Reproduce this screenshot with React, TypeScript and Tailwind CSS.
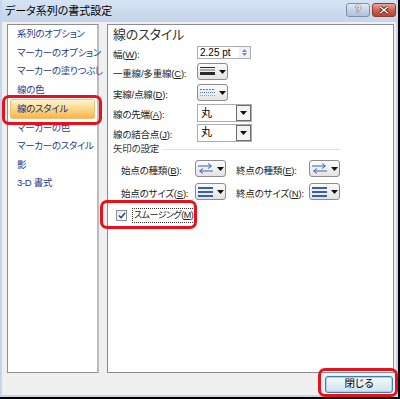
import React from "react";

const font = "font-['Liberation_Sans','Noto_Sans_CJK_JP',sans-serif] [font-feature-settings:'palt']";

const listItems = [
  "系列のオプション",
  "マーカーのオプション",
  "マーカーの塗りつぶし",
  "線の色",
  "線のスタイル",
  "マーカーの色",
  "マーカーのスタイル",
  "影",
  "3-D 書式",
];

function Caret() {
  return (
    <svg width="7" height="4" viewBox="0 0 7 4">
      <path d="M0 0h7L3.5 4z" fill="#111" />
    </svg>
  );
}

function CompoundIcon() {
  return (
    <svg width="15" height="9" viewBox="0 0 15 9">
      <rect x="0" y="0" width="15" height="1" fill="#2a2a2a" />
      <rect x="0" y="2" width="15" height="2" fill="#9fb3b5" />
      <rect x="0" y="5" width="15" height="3" fill="#2a2a2a" />
    </svg>
  );
}

function DashIcon() {
  return (
    <svg width="15" height="9" viewBox="0 0 15 9">
      <line x1="0" y1="1.5" x2="15" y2="1.5" stroke="#5a78c8" strokeWidth="1" strokeDasharray="2 1" />
      <line x1="0" y1="4.5" x2="15" y2="4.5" stroke="#5a78c8" strokeWidth="1" strokeDasharray="1 1" />
      <line x1="0" y1="7.5" x2="15" y2="7.5" stroke="#8fa2d6" strokeWidth="1" strokeDasharray="1 1" />
    </svg>
  );
}

function ArrowIcon() {
  return (
    <svg width="15" height="11" viewBox="0 0 15 11">
      <path d="M0 3h13" stroke="#3f63b6" strokeWidth="1" />
      <path d="M10 0.5l3.5 2.5-3.5 2.5" stroke="#3f63b6" strokeWidth="1" fill="none" />
      <path d="M2 8h13" stroke="#3f63b6" strokeWidth="1" />
      <path d="M5 5.5L1.5 8 5 10.5" stroke="#3f63b6" strokeWidth="1" fill="none" />
    </svg>
  );
}

function SizeIcon() {
  return (
    <svg width="15" height="10" viewBox="0 0 15 10">
      <rect x="0" y="0" width="15" height="2" fill="#3a5ea8" />
      <rect x="0" y="4" width="15" height="2" fill="#3a5ea8" />
      <rect x="0" y="8" width="15" height="2" fill="#3a5ea8" />
    </svg>
  );
}

function IconButton({ children }: { children: React.ReactNode }) {
  return (
    <div className="flex h-[17px] w-[31px] shrink-0 items-center justify-center gap-[4px] rounded-[3px] border border-[#8c8c8c] bg-gradient-to-b from-[#fbfbfb] to-[#e3e3e3] pl-[1px]">
      {children}
      <Caret />
    </div>
  );
}

function Combo({ value }: { value: string }) {
  return (
    <div className="flex h-[18px] w-[55px] items-stretch border border-[#a9aeb6] bg-white">
      <span className="flex flex-1 items-center pl-[3px] text-[11px] text-black">{value}</span>
      <span className="flex w-[15px] items-center justify-center border border-[#6e6e6e] bg-[#f4f4f4]">
        <Caret />
      </span>
    </div>
  );
}

function Label({ text, k }: { text: string; k: string }) {
  return (
    <span className="whitespace-nowrap text-[9.5px] tracking-[-0.2px] text-[#222]">
      {text}(<u>{k}</u>):
    </span>
  );
}

export default function App() {
  return (
    <div className={`relative h-[399px] w-[400px] bg-black ${font}`}>
      <div className="flex h-[397px] w-[398px] flex-col bg-[#c5d6ec] px-[2px] pb-[2px]">
        {/* Title bar */}
        <div className="flex h-[22px] items-center bg-gradient-to-b from-[#d6e3f3] to-[#c4d5eb] pl-[3px] pr-0">
          <span className="flex-1 text-[11px] text-black">データ系列の書式設定</span>
          <div className="mb-[3px] flex gap-[2px]">
            <div className="flex h-[14px] w-[24px] items-center justify-center rounded-[3px] border border-[#7d8ea6] bg-gradient-to-b from-[#e3ecf7] via-[#c2d3e8] to-[#aec3de]">
              <span className="text-[10px] font-bold leading-none text-white [text-shadow:0_0_1px_#333,0_0_1px_#333]">?</span>
            </div>
            <div className="flex h-[14px] w-[24px] items-center justify-center rounded-[3px] border border-[#8d3b34] bg-gradient-to-b from-[#e9a99a] via-[#d2614f] to-[#c0402e]">
              <svg width="10" height="8" viewBox="0 0 10 8">
                <path d="M1.5 1l7 6M8.5 1l-7 6" stroke="#3a1a16" strokeWidth="3" />
                <path d="M1.5 1l7 6M8.5 1l-7 6" stroke="#fff" strokeWidth="1.6" />
              </svg>
            </div>
          </div>
        </div>

        {/* Client area */}
        <div className="flex flex-1 flex-col bg-[#f0f0f0] pl-[5px] pr-[2px] pt-[2px]">
          <div className="flex h-[349px] gap-[8px]">
            {/* Left list */}
            <div className="w-[92px] shrink-0 border border-[#8e8f8f] border-r-[2px] border-r-[#b9bcc2] bg-white">
              {listItems.map((item) =>
                item === "線のスタイル" ? (
                  <div
                    key={item}
                    className="mx-[2px] flex h-[19.5px] items-center whitespace-nowrap rounded-[2px] border border-[#f0c173] bg-gradient-to-b from-[#fff3cf] via-[#fcd889] to-[#f8b348] pl-[6px] text-[9.5px] tracking-[-0.3px] text-[#1a2f7a]"
                  >
                    {item}
                  </div>
                ) : (
                  <div
                    key={item}
                    className="flex h-[18.5px] items-center whitespace-nowrap pl-[9px] text-[9.5px] tracking-[-0.3px] text-[#1f3a8c]"
                  >
                    {item}
                  </div>
                )
              )}
            </div>

            {/* Right panel */}
            <div className="flex-1 border border-[#898c95] bg-white pl-[5px]">
              <div className="flex h-[19px] items-center text-[13px] tracking-[-0.2px] text-[#333]">線のスタイル</div>

              <div className="flex h-[17px] items-center">
                <div className="w-[84px]"><Label text="幅" k="W" /></div>
                <div className="flex h-[13px] w-[54px] items-center border border-[#abadb3] bg-white">
                  <span className="flex-1 pl-[2px] text-[10px] leading-none text-black">2.25 pt</span>
                  <div className="flex h-full w-[11px] flex-col items-center justify-center gap-[1px] bg-[#eef1f5]">
                    <svg width="5" height="3" viewBox="0 0 5 3"><path d="M0 3h5L2.5 0z" fill="#7a8fb0" /></svg>
                    <svg width="5" height="3" viewBox="0 0 5 3"><path d="M0 0h5L2.5 3z" fill="#7a8fb0" /></svg>
                  </div>
                </div>
              </div>

              <div className="flex h-[21px] items-center">
                <div className="w-[84px]"><Label text="一重線/多重線" k="C" /></div>
                <IconButton><CompoundIcon /></IconButton>
              </div>

              <div className="flex h-[21px] items-center">
                <div className="w-[84px]"><Label text="実線/点線" k="D" /></div>
                <IconButton><DashIcon /></IconButton>
              </div>

              <div className="flex h-[20px] items-center">
                <div className="w-[84px]"><Label text="線の先端" k="A" /></div>
                <Combo value="丸" />
              </div>

              <div className="flex h-[19px] items-center">
                <div className="w-[84px]"><Label text="線の結合点" k="J" /></div>
                <Combo value="丸" />
              </div>

              <div className="flex h-[15px] items-center gap-[3px] pr-[52px]">
                <span className="whitespace-nowrap text-[9.5px] tracking-[-0.2px] text-[#333]">矢印の設定</span>
                <div className="h-px flex-1 bg-[#dce3ea]" />
              </div>

              <div className="flex h-[23px] items-center pl-[8px]">
                <div className="w-[74px] shrink-0"><Label text="始点の種類" k="B" /></div>
                <IconButton><ArrowIcon /></IconButton>
                <div className="ml-[10px] w-[73px] shrink-0"><Label text="終点の種類" k="E" /></div>
                <IconButton><ArrowIcon /></IconButton>
              </div>

              <div className="flex h-[23px] items-center pl-[8px]">
                <div className="w-[74px] shrink-0"><Label text="始点のサイズ" k="S" /></div>
                <IconButton><SizeIcon /></IconButton>
                <div className="ml-[10px] w-[73px] shrink-0"><Label text="終点のサイズ" k="N" /></div>
                <IconButton><SizeIcon /></IconButton>
              </div>

              <div className="flex h-[24px] items-center gap-[5px] pl-[3px]">
                <div className="flex h-[11px] w-[11px] items-center justify-center border border-[#8e8f8f] bg-gradient-to-br from-[#e4e6ea] to-white">
                  <svg width="8" height="7" viewBox="0 0 9 8">
                    <path d="M1 4l2.5 2.5L8 1" stroke="#22409a" strokeWidth="1.8" fill="none" />
                  </svg>
                </div>
                <span className="whitespace-nowrap border border-dotted border-[#333] px-[1px] text-[9px] leading-[13px] tracking-[-0.5px] text-[#222]">
                  スムージング(<u>M</u>)
                </span>
              </div>
            </div>
          </div>

          {/* Footer */}
          <div className="flex flex-1 items-center justify-end pr-[1px]">
            <button className="flex h-[17px] w-[68px] items-center justify-center rounded-[3px] border border-[#3c7fb1] bg-gradient-to-b from-[#f4f9fc] via-[#e3eef6] to-[#cfe2ee] text-[10.5px] text-black shadow-[inset_0_0_0_1px_#a6d4f0]">
              閉じる
            </button>
          </div>
        </div>
      </div>

      {/* Red annotation rings */}
      <div className="absolute left-[2px] top-[95px] h-[30px] w-[100px] rounded-[7px] border-[3px] border-[#e8101a]" />
      <div className="absolute left-[100px] top-[200px] h-[29px] w-[97px] rounded-[7px] border-[3px] border-[#e8101a]" />
      <div className="absolute left-[318px] top-[368px] h-[29px] w-[80px] rounded-[7px] border-[3px] border-[#e8101a]" />
    </div>
  );
}
